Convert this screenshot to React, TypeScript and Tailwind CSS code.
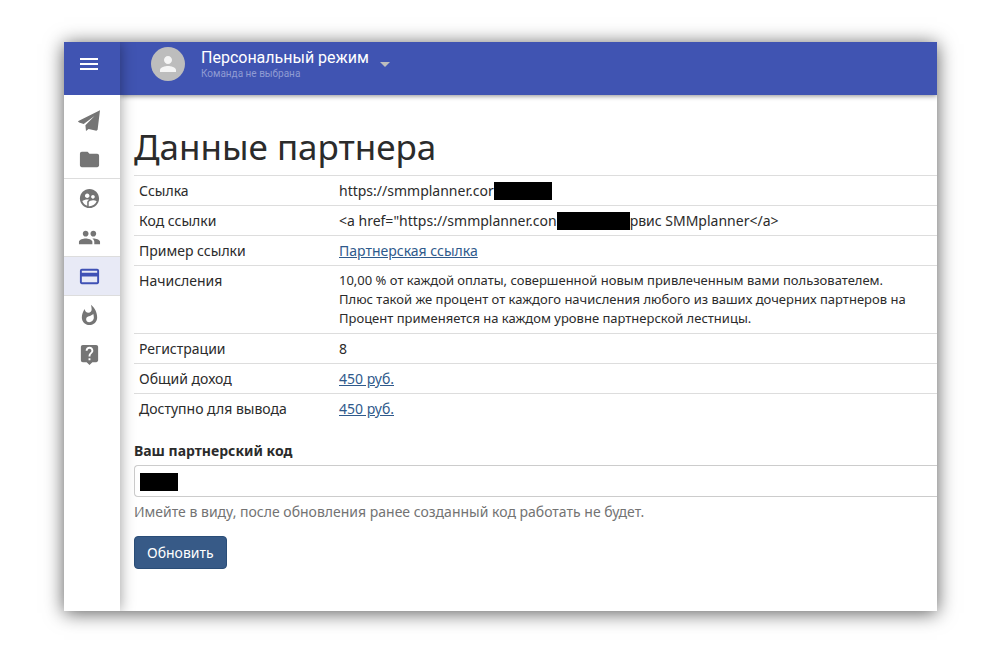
import React from "react";
import {
  MdArrowDropDown,
  MdFolder,
  MdLiveHelp,
  MdMenu,
  MdOutlinePayment,
  MdPeople,
  MdPerson,
  MdSupervisedUserCircle,
  MdWhatshot,
} from "react-icons/md";

function PlaneIcon() {
  return (
    <svg viewBox="0 0 24 24" className="size-6" fill="currentColor">
      <path d="M23 1.2.9 12.2l1.2 1.3 4.6 1.5L17.5 7 8.4 16.2l.6 5.9 2.6-2.2 7.8 1.9 1.2-1z" />
    </svg>
  );
}

const menu = [
  { label: "Посты", icon: <PlaneIcon /> },
  { label: "Файлы", icon: <MdFolder size={23} />, divider: true },
  { label: "Аккаунты", icon: <MdSupervisedUserCircle size={23} /> },
  { label: "Команды", icon: <MdPeople size={23} />, divider: true },
  { label: "Оплата", icon: <MdOutlinePayment size={23} />, active: true, divider: true },
  { label: "Новости", icon: <MdWhatshot size={23} /> },
  { label: "Помощь", icon: <MdLiveHelp size={23} /> },
];

function Sidebar() {
  return (
    <aside className="relative z-20 flex w-14 shrink-0 flex-col bg-white shadow-[0_0_14px_rgba(0,0,0,0.4)]">
      <button
        aria-label="Меню"
        className="flex h-[53px] items-center justify-center bg-[#4054b2] pr-1.5 pb-2.5 text-white"
      >
        <MdMenu size={24} />
      </button>
      <nav className="flex flex-col pt-1.5">
        {menu.map((item) => (
          <a
            key={item.label}
            href="#"
            aria-label={item.label}
            className={`flex h-[39px] items-center justify-center pr-1.5 ${
              item.active ? "bg-[#e8eaf6] text-[#3f51b5]" : "text-[#757575]"
            } ${item.divider ? "border-b border-[#ddd]" : ""}`}
          >
            {item.icon}
          </a>
        ))}
      </nav>
    </aside>
  );
}

function Header() {
  return (
    <header className="relative z-10 flex h-[53px] shrink-0 bg-[#4054b2] pb-2.5 pl-[31px] font-[Roboto,sans-serif] text-white shadow-[0_1px_5px_rgba(0,0,0,0.45)]">
      <button className="flex items-center text-left">
        <span className="mr-4 flex size-[34px] items-center justify-center rounded-full bg-[#bdbdbd] text-[#f5f5f5]">
          <MdPerson size={24} />
        </span>
        <span className="flex flex-col">
          <span className="text-base leading-5">Персональный режим</span>
          <span className="text-[10px] leading-3 text-[#8f9bd3]">
            Команда не выбрана
          </span>
        </span>
        <MdArrowDropDown size={24} className="ml-1 text-[#bdbdbd]" />
      </button>
    </header>
  );
}

function Redacted({ className }: { className: string }) {
  return <span className={`inline-block bg-black align-middle ${className}`} />;
}

function Row({ label, children }: { label: string; children: React.ReactNode }) {
  return (
    <tr className="border-t border-[#ddd] align-top">
      <th scope="row" className="w-[200px] p-[5px] text-left font-normal">
        {label}
      </th>
      <td className="py-[5px] pl-[5px] whitespace-nowrap">{children}</td>
    </tr>
  );
}

function PartnerData() {
  const link = "text-[#2f5a8c] underline";

  return (
    <main className="flex-1 overflow-hidden pt-8 pl-3.5">
      <h1 className="mb-2 text-[35px] leading-10">Данные партнера</h1>

      <table className="w-full table-fixed border-collapse">
        <tbody>
          <Row label="Ссылка">
            <span className="flex items-center">
              https://smmplanner.cor
              <Redacted className="h-[18px] w-[58px]" />
            </span>
          </Row>
          <Row label="Код ссылки">
            <span className="flex items-center">
              {'<a href="https://smmplanner.con'}
              <Redacted className="h-[18px] w-[73px]" />
              {"рвис SMMplanner</a>"}
            </span>
          </Row>
          <Row label="Пример ссылки">
            <a href="#" className={link}>
              Партнерская ссылка
            </a>
          </Row>
          <Row label="Начисления">
            <p className="text-[13px] leading-[19px]">
              10,00 % от каждой оплаты, совершенной новым привлеченным вами
              пользователем.
              <br />
              Плюс такой же процент от каждого начисления любого из ваших
              дочерних партнеров на
              <br />
              Процент применяется на каждом уровне партнерской лестницы.
            </p>
          </Row>
          <Row label="Регистрации">8</Row>
          <Row label="Общий доход">
            <a href="#" className={link}>
              450 руб.
            </a>
          </Row>
          <Row label="Доступно для вывода">
            <a href="#" className={link}>
              450 руб.
            </a>
          </Row>
        </tbody>
      </table>

      <form className="mt-[18px]" onSubmit={(e) => e.preventDefault()}>
        <label htmlFor="code" className="block font-bold">
          Ваш партнерский код
        </label>
        <div className="relative mt-[5px]">
          <input
            id="code"
            type="text"
            className="block h-8 w-full rounded-l border border-r-0 border-[#ccc] bg-white px-1.5"
          />
          <span className="absolute top-2 left-1.5 h-[18px] w-[38px] bg-black" />
        </div>
        <p className="mt-[5px] text-[#737373]">
          Имейте в виду, после обновления ранее созданный код работать не будет.
        </p>
        <button
          type="submit"
          className="mt-[15px] h-[33px] rounded border border-[#2a4d77] bg-[#375a87] px-3 text-white"
        >
          Обновить
        </button>
      </form>
    </main>
  );
}

export default function App() {
  return (
    <div className="min-h-screen bg-white px-16 py-[42px] font-['Noto_Sans',sans-serif] text-sm leading-[19px] text-[#2b2b2b]">
      <div className="flex min-h-[calc(100vh-84px)] shadow-[0_2px_18px_rgba(0,0,0,0.65)]">
        <div className="flex w-full overflow-hidden bg-white">
          <Sidebar />
          <div className="flex min-w-0 flex-1 flex-col">
            <Header />
            <PartnerData />
          </div>
        </div>
      </div>
    </div>
  );
}
